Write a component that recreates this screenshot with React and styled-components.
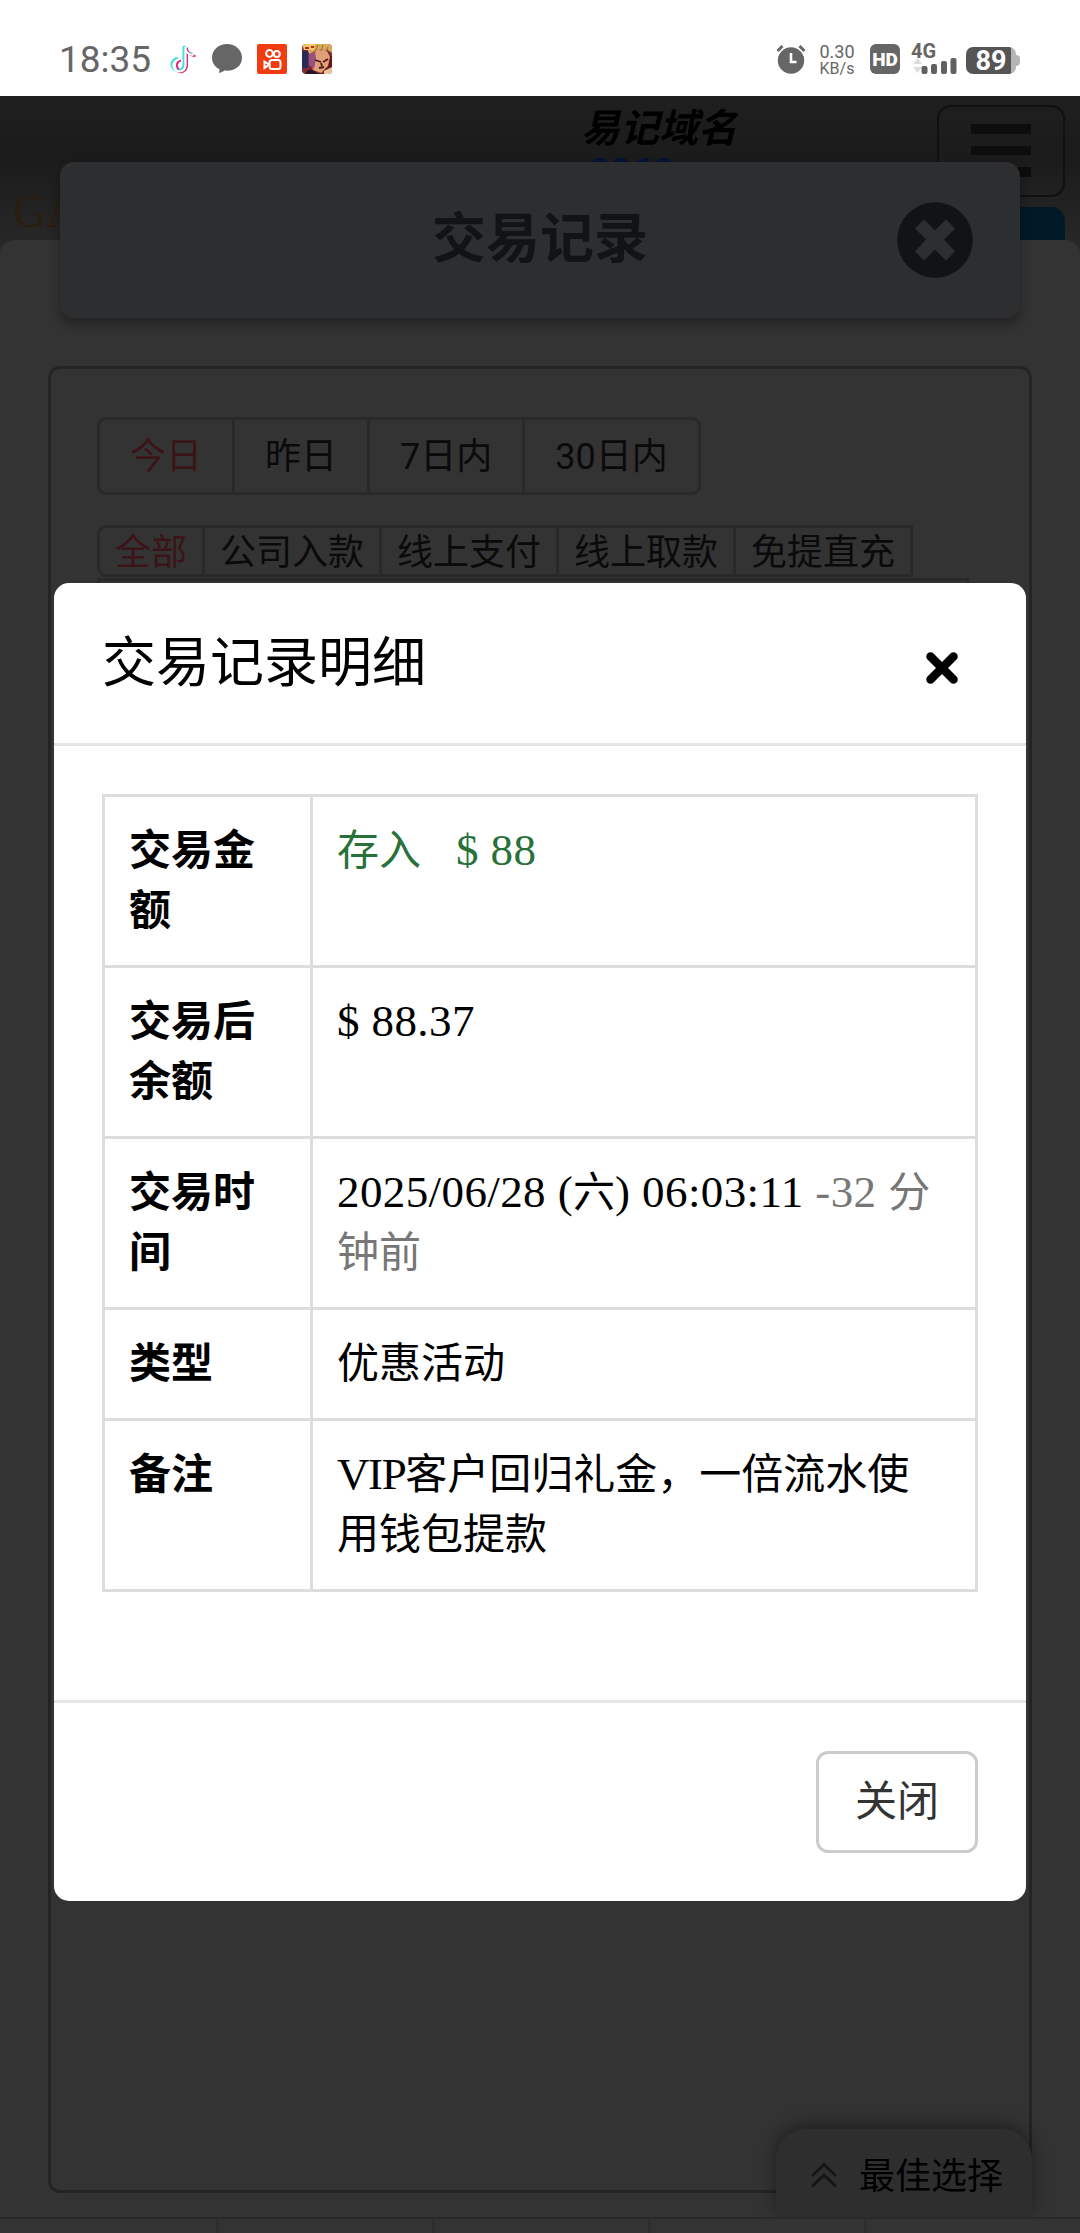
import React, { Component } from "react";
import styled, { createGlobalStyle } from "styled-components";

const dateTabs = ["今日", "昨日", "7日内", "30日内"];
const typeTabs = ["全部", "公司入款", "线上支付", "线上取款", "免提直充"];

export default class App extends Component {
  render() {
    return (
      <Screen>
        <GlobalStyle />
        <StatusBar />
        <Page>
          <SiteHeader />
          <PageBody>
            <Frame>
              <TabRow>
                {dateTabs.map((label, i) => (
                  <Tab key={label} $active={i === 0} $tall>
                    {label}
                  </Tab>
                ))}
              </TabRow>
              <TabRow $square>
                {typeTabs.map((label, i) => (
                  <Tab key={label} $active={i === 0}>
                    {label}
                  </Tab>
                ))}
              </TabRow>
              <NextRow />
            </Frame>
          </PageBody>
          <BottomNav>
            <span />
            <span />
            <span />
            <span />
            <span />
          </BottomNav>
          <TitleCard>
            <h1>交易记录</h1>
            <CloseCircle viewBox="0 0 76 76">
              <circle cx="38" cy="38" r="37.8" fill="#121316" />
              <path
                d="M27 18.500 38 29.500 49 18.500 57 26.500 46 37.500 57 49.500 49 57.500 38 46.500 27 57.500 19 49.500 30 37.500 19 26.500Z"
                fill="#2d2e30"
                stroke="#2d2e30"
                strokeWidth="1.500"
                strokeLinejoin="round"
              />
            </CloseCircle>
          </TitleCard>
          <BestPick>
            <svg width="28" height="26" viewBox="0 0 28 26">
              <path
                d="M2 14 14 2.500 26 14M2 24.500 14 13 26 24.500"
                fill="none"
                stroke="#151515"
                strokeWidth="2.800"
              />
            </svg>
            <span>最佳选择</span>
          </BestPick>
          <DetailModal />
        </Page>
      </Screen>
    );
  }
}

function StatusBar() {
  return (
    <StatusWrapper>
      <Clock>18:35</Clock>
      <svg width="28" height="30" viewBox="0 0 28 30">
        <g fill="none" strokeWidth="3">
          <path
            d="M15 2v18.500a6 6 0 1 1-6-6M15 2c.5 5 4 8 8.500 8"
            stroke="#3fe0e4"
          />
          <path
            d="M18 3.500v19a6.500 6.500 0 0 1-9 5.200M18 5c1 4.500 4 7 8.500 7M12 16.500a5 5 0 0 0-2 9"
            stroke="#e0287a"
            strokeWidth="2"
          />
          <path
            d="M16.500 3v18.500a6 6 0 1 1-6-6M16.500 4c.5 4.500 4 7 8 7"
            stroke="#fff"
            strokeWidth="2.200"
          />
        </g>
      </svg>
      <svg width="30" height="30" viewBox="0 0 30 30">
        <path
          d="M15 0C6.700 0 0 6 0 13.800c0 5 3 9.200 7.500 11.500 0 1.500-.2 2.500-.8 3.700 2.500-.2 4.300-1.200 5.800-2.400C22.500 27.800 30 22 30 13.800 30 6 23.300 0 15 0Z"
          fill="#666"
        />
      </svg>
      <svg width="30" height="30" viewBox="0 0 30 30">
        <rect width="30" height="30" rx="2" fill="#f23c10" />
        <g fill="none" stroke="#fff" strokeWidth="2">
          <circle cx="12.500" cy="9.500" r="3.400" />
          <circle cx="19.800" cy="10" r="3" />
          <rect x="12.500" y="16" width="11" height="9" rx="2.500" />
          <path d="M12 20.500 7.500 17.500v6.500Z" />
        </g>
      </svg>
      <svg width="30" height="30" viewBox="0 0 30 30">
        <defs>
          <clipPath id="hero">
            <rect width="30" height="30" rx="4" />
          </clipPath>
        </defs>
        <g clipPath="url(#hero)">
          <rect width="30" height="30" fill="#7d2a31" />
          <path d="M0 7h6v17H0Z" fill="#272b5c" />
          <path d="M23 12h7v14h-9Z" fill="#6b1218" />
          <path d="M12 0h18v9l-6-4-10 1-6 5-3-6Z" fill="#d9aa5c" />
          <path d="M14 6 24 5l4 8-2 9-7 7-8-3-3-10Z" fill="#dfa078" />
          <path d="m7 10 6-3 1 8-2 10-5-4Z" fill="#96527d" />
          <path
            d="m13 16 6 2M21 18l5-3M17 24l5-1M19 19l1 3"
            stroke="#4c1a1b"
            strokeWidth="1.800"
          />
          <path d="m16 1-3 7M21 1l-2 6M26 3l-2 5" stroke="#a36b2c" />
          <path d="M0 0h13l-1 6H2Z" fill="#f3c66c" />
          <path d="M3 4h4M9 3h3" stroke="#c0271d" strokeWidth="2" />
          <path d="M3 30c3-6 7-5 12-1l7 1Z" fill="#24172a" />
          <path d="m22 27 8-4v7h-8Z" fill="#eac49a" />
        </g>
      </svg>
      <Spacer />
      <AlarmIcon viewBox="0 0 30 30">
        <circle cx="15" cy="16.500" r="13.200" fill="#666" />
        <path d="m1.500 7 5-5M28.500 7l-5-5" stroke="#666" strokeWidth="3" />
        <path d="M15 9v9h5.500" fill="none" stroke="#fff" strokeWidth="2.600" />
      </AlarmIcon>
      <Speed>
        <b>0.30</b>
        <span>KB/s</span>
      </Speed>
      <HdBadge>HD</HdBadge>
      <Signal>
        <b>4G</b>
        <svg width="46" height="17" viewBox="0 0 46 17">
          <path d="m1 7 4.500-6L10 7Zm0 3 4.500 6L10 10Z" fill="#ddd" />
          <g fill="#606060">
            <rect x="9.500" y="9" width="6" height="8" rx="2" />
            <rect x="19" y="7" width="6" height="10" rx="2" />
            <rect x="29" y="4" width="6" height="13" rx="2" />
            <rect x="38.500" y="1" width="6" height="16" rx="2" />
          </g>
        </svg>
      </Signal>
      <Battery>
        <b>89</b>
      </Battery>
    </StatusWrapper>
  );
}

function SiteHeader() {
  return (
    <HeaderWrapper>
      <Logo>GA</Logo>
      <Domain>
        <span>易记域名</span>
        <b>2262</b>
      </Domain>
      <RightColumn>
        <MenuButton>
          <i />
          <i />
          <i />
        </MenuButton>
        <BlueButton />
      </RightColumn>
    </HeaderWrapper>
  );
}

function DetailModal() {
  return (
    <Modal>
      <ModalHeader>
        <h2>交易记录明细</h2>
        <svg width="34" height="34" viewBox="0 0 34 34">
          <path
            d="M5.500 5.500 28.500 28.500M28.500 5.500 5.500 28.500"
            stroke="#000"
            strokeWidth="8.500"
            strokeLinecap="round"
          />
        </svg>
      </ModalHeader>
      <ModalBody>
        <DetailTable>
          <tbody>
            <tr>
              <th>交易金额</th>
              <td>
                <Income>
                  存入<Latin>&nbsp;&nbsp; $ 88</Latin>
                </Income>
              </td>
            </tr>
            <tr>
              <th>交易后余额</th>
              <td>
                <Latin>$ 88.37</Latin>
              </td>
            </tr>
            <tr>
              <th>交易时间</th>
              <td>
                <Latin>2025/06/28 (</Latin>六<Latin>) 06:03:11 </Latin>
                <Muted>
                  <Latin>-32 </Latin>分<br />
                  钟前
                </Muted>
              </td>
            </tr>
            <tr>
              <th>类型</th>
              <td>优惠活动</td>
            </tr>
            <tr>
              <th>备注</th>
              <td>
                <Latin $tight>VIP</Latin>客户回归礼金，一倍流水使
                <br />
                用钱包提款
              </td>
            </tr>
          </tbody>
        </DetailTable>
      </ModalBody>
      <ModalFooter>
        <CloseButton>关闭</CloseButton>
      </ModalFooter>
    </Modal>
  );
}

const GlobalStyle = createGlobalStyle`
  * {
    box-sizing: border-box;
  }
  body {
    margin: 0;
    background: #333;
    font-family: Roboto, "Noto Sans CJK SC", sans-serif;
  }
  h1, h2 {
    margin: 0;
  }
`;

const Screen = styled.div`
  display: flex;
  flex-direction: column;
  width: 1080px;
  height: 2233px;
  overflow: hidden;
`;

const StatusWrapper = styled.div`
  display: flex;
  align-items: center;
  height: 96px;
  padding: 22px 60px 0 59px;
  background: #fff;
  color: #666;
  svg {
    flex: none;
    margin-right: 15px;
  }
`;

const Clock = styled.span`
  width: 110px;
  padding-top: 2px;
  font-size: 37px;
  line-height: 38px;
  white-space: nowrap;
`;

const Spacer = styled.div`
  flex: 1;
`;

const AlarmIcon = styled.svg`
  width: 30px;
  height: 30px;
`;

const Speed = styled.div`
  display: flex;
  flex-direction: column;
  align-items: center;
  gap: 1px;
  width: 36px;
  margin: 2px 15px 0 -2px;
  font-size: 16px;
  line-height: 16px;
  b {
    font-weight: 400;
    font-size: 18px;
  }
`;

const HdBadge = styled.div`
  width: 30px;
  height: 30px;
  margin-right: 12px;
  border-radius: 6px;
  background: #666;
  color: #fff;
  font-size: 19px;
  font-weight: 900;
  line-height: 31px;
  text-align: center;
`;

const Signal = styled.div`
  display: flex;
  flex-direction: column;
  width: 46px;
  height: 30px;
  margin-right: 8px;
  b {
    font-size: 20px;
    line-height: 15px;
    height: 13px;
    margin-left: -1px;
  }
`;

const Battery = styled.div`
  display: flex;
  align-items: center;
  width: 54px;
  height: 27px;
  margin-top: 2px;
  b {
    width: 50px;
    border-radius: 7px;
    background: linear-gradient(90deg, #555 45px, #b5b5b5 45px);
    color: #fff;
    font-size: 27px;
    line-height: 29px;
    height: 27px;
    text-align: center;
  }
  &::after {
    content: "";
    width: 4px;
    height: 11px;
    border-radius: 0 4px 4px 0;
    background: #b5b5b5;
  }
`;

const Page = styled.div`
  position: relative;
  display: flex;
  flex-direction: column;
  flex: 1;
  background: linear-gradient(180deg, #1f1f1f 0, #1b1b1b 60px, #292929 160px);
`;

const HeaderWrapper = styled.header`
  display: flex;
  justify-content: space-between;
  height: 144px;
  overflow: hidden;
`;

const Logo = styled.div`
  width: 570px;
  padding: 93px 0 0 13px;
  color: #2b1d10;
  font-family: "Liberation Serif", serif;
  font-size: 46px;
  font-variant: small-caps;
  line-height: 46px;
`;

const Domain = styled.div`
  display: flex;
  flex-direction: column;
  flex: 1;
  padding: 11px 0 0 11px;
  color: #000;
  font-size: 39px;
  font-style: italic;
  font-weight: 700;
  line-height: 44px;
  b {
    color: #071137;
    margin-left: 6px;
    font-size: 38px;
    line-height: 44px;
  }
`;

const RightColumn = styled.div`
  width: 143px;
  padding: 9px 15px 0 0;
`;

const MenuButton = styled.div`
  display: flex;
  flex-direction: column;
  align-items: center;
  gap: 12px;
  width: 128px;
  height: 92px;
  padding-top: 17px;
  border: 2px solid #101010;
  border-radius: 14px;
  i {
    width: 60px;
    height: 9.5px;
    background: #0d0d0d;
  }
`;

const BlueButton = styled.div`
  height: 60px;
  margin: 10px 0 0 20px;
  border-radius: 14px;
  background: #001b26;
`;

const PageBody = styled.main`
  flex: 1;
  padding: 126px 48px 24px;
  border-radius: 14px 14px 0 0;
  background: #333;
`;

const Frame = styled.section`
  height: 100%;
  padding: 48px 46px;
  border: 3px solid #242424;
  border-radius: 12px;
`;

const Tab = styled.div`
  height: ${(props) => (props.$tall ? "78px" : "52px")};
  padding: ${(props) => (props.$tall ? "0 30px" : "0 15px")};
  border: 3px solid #292929;
  margin-right: -3px;
  color: ${(props) => (props.$active ? "#3b1417" : "#0a0a0a")};
  font-size: 36px;
  line-height: ${(props) => (props.$tall ? "74px" : "50px")};
  white-space: nowrap;
`;

const TabRow = styled.div`
  display: flex;
  margin-bottom: 30px;
  ${Tab}:first-child {
    border-radius: 9px 0 0 9px;
  }
  ${Tab}:last-child {
    border-radius: ${(props) => (props.$square ? 0 : "0 9px 9px 0")};
  }
`;

const NextRow = styled.div`
  width: 872px;
  height: 52px;
  margin-top: -29px;
  border: 3px solid #292929;
`;

const BottomNav = styled.nav`
  display: grid;
  grid-template-columns: repeat(5, 1fr);
  height: 16px;
  border-top: 2px solid #292929;
  background: #333;
  span + span {
    border-left: 3px solid #2e2e2e;
  }
`;

const TitleCard = styled.div`
  position: absolute;
  top: 66px;
  left: 60px;
  display: flex;
  align-items: center;
  justify-content: center;
  width: 960px;
  height: 156px;
  border-radius: 14px;
  background: #2d2e30;
  box-shadow: 0 6px 12px rgba(0, 0, 0, 0.35);
  h1 {
    color: #121316;
    font-size: 54px;
    line-height: 78px;
  }
`;

const CloseCircle = styled.svg`
  position: absolute;
  top: 40px;
  right: 47px;
  width: 76px;
  height: 76px;
`;

const BestPick = styled.div`
  position: absolute;
  right: 48px;
  bottom: 16px;
  display: flex;
  align-items: center;
  gap: 21px;
  width: 256px;
  height: 88px;
  padding: 4px 0 0 34px;
  border-radius: 30px 30px 0 0;
  background: #2e2e2e;
  box-shadow: 0 -4px 18px rgba(0, 0, 0, 0.4);
  clip-path: inset(-40px -40px 0 -40px);
  color: #000;
  font-size: 36px;
  white-space: nowrap;
  span {
    padding-bottom: 5px;
  }
`;

const Modal = styled.div`
  position: absolute;
  top: 487px;
  left: 54px;
  display: flex;
  flex-direction: column;
  width: 972px;
  height: 1318px;
  border-radius: 15px;
  background: #fff;
  color: #000;
`;

const ModalHeader = styled.div`
  display: flex;
  align-items: center;
  justify-content: space-between;
  height: 163px;
  padding: 0 67px 0 48px;
  border-bottom: 3px solid #e5e5e5;
  h2 {
    padding-top: 2px;
    font-size: 54px;
    font-weight: 400;
    line-height: 78px;
  }
  svg {
    margin-top: 10px;
  }
`;

const ModalBody = styled.div`
  flex: 1;
  padding: 48px;
`;

const DetailTable = styled.table`
  width: 876px;
  border-collapse: collapse;
  table-layout: fixed;
  font-size: 42px;
  line-height: 60px;
  th,
  td {
    padding: 24px 0 24px 24px;
    border: 3px solid #ddd;
    text-align: left;
    vertical-align: top;
  }
  th {
    width: 208px;
    padding-right: 24px;
  }
`;

const Latin = styled.span`
  font-family: "Liberation Serif", serif;
  font-size: 45px;
  line-height: 1;
  letter-spacing: ${(props) => (props.$tight ? "-1.4px" : "0.4px")};
  white-space: pre-wrap;
`;

const Income = styled.span`
  color: #28713a;
`;

const Muted = styled.span`
  color: #777;
`;

const ModalFooter = styled.div`
  display: flex;
  justify-content: flex-end;
  height: 201px;
  padding: 48px;
  border-top: 3px solid #e5e5e5;
`;

const CloseButton = styled.button`
  width: 162px;
  height: 102px;
  padding: 0 0 10px;
  border: 3px solid #ccc;
  border-radius: 12px;
  background: #fff;
  color: #333;
  font-family: inherit;
  font-size: 42px;
`;
